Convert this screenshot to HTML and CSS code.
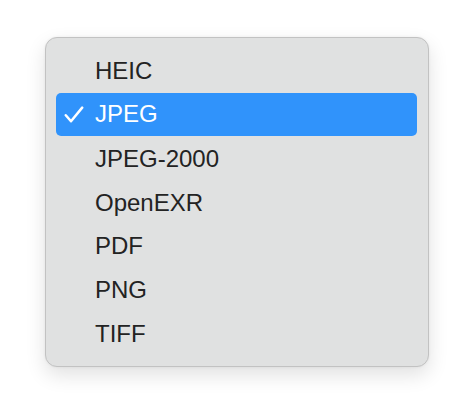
FILE: index.html
```html
<!DOCTYPE html>
<html>
<head>
<meta charset="utf-8">
<link rel="stylesheet" href="styles.css">
</head>
<body>
<div class="menu">
  <div class="item"><span class="check"></span><span class="label">HEIC</span></div>
  <div class="item selected"><span class="check"><svg width="20" height="17" viewBox="0 0 20 17"><path d="M1.8 9.2 L7 15.2 L18.2 1.6" fill="none" stroke="#fff" stroke-width="2.5" stroke-linecap="round" stroke-linejoin="round"/></svg></span><span class="label">JPEG</span></div>
  <div class="item"><span class="check"></span><span class="label">JPEG-2000</span></div>
  <div class="item"><span class="check"></span><span class="label">OpenEXR</span></div>
  <div class="item"><span class="check"></span><span class="label">PDF</span></div>
  <div class="item"><span class="check"></span><span class="label">PNG</span></div>
  <div class="item"><span class="check"></span><span class="label">TIFF</span></div>
</div>
</body>
</html>
```
FILE: styles.css
```css
html, body {
  margin: 0;
  padding: 0;
  background: #ffffff;
}
body {
  padding: 37px 0 40px 45px;
  font-family: "Liberation Sans", Arial, sans-serif;
}
.menu {
  width: 361px;
  height: 307px;
  padding: 11px 11px 10px 10px;
  box-sizing: content-box;
  background: #e0e1e1;
  border: 1px solid #c2c2c2;
  border-radius: 12px;
  box-shadow: 0 8px 20px rgba(0, 0, 0, 0.12), 0 0 3px rgba(0, 0, 0, 0.06);
  display: flex;
  flex-direction: column;
}
.item {
  height: 44px;
  display: flex;
  align-items: center;
  border-radius: 5px;
  color: #232323;
  font-size: 24px;
}
.item.selected {
  background: #3093fb;
  color: #ffffff;
  height: 43px;
  margin-bottom: 1px;
}
.check {
  width: 39px;
  padding-left: 8px;
  box-sizing: border-box;
  display: flex;
  align-items: center;
}
.label {
  line-height: 1;
}
```
